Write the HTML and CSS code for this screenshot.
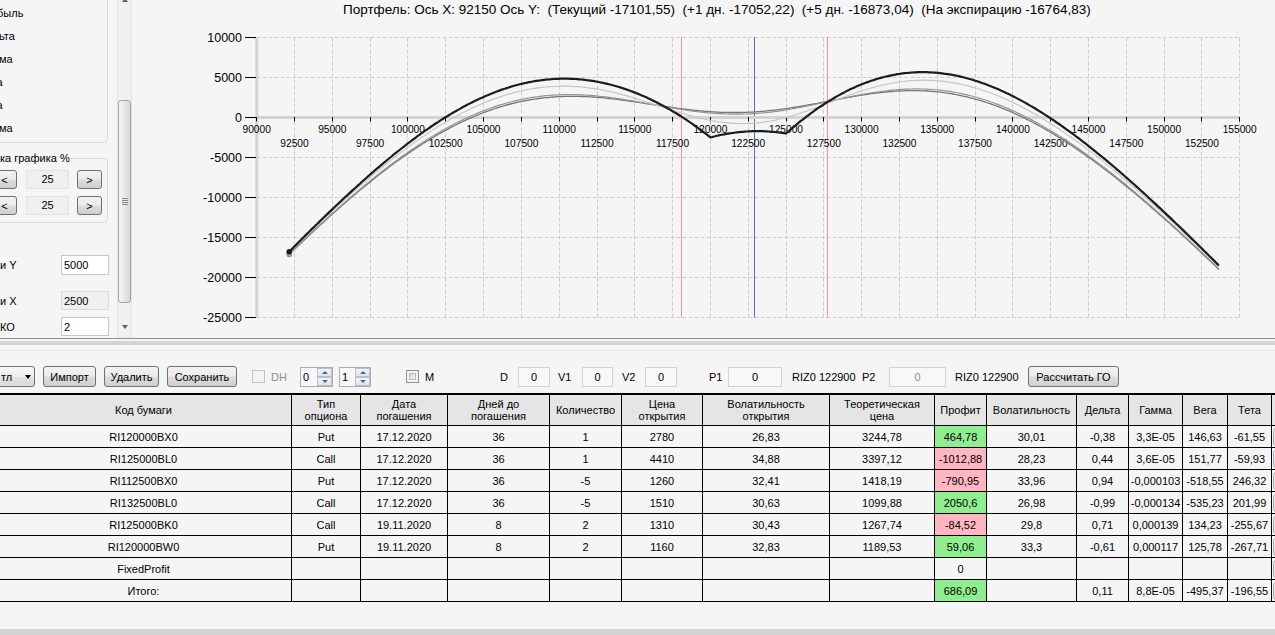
FILE: index.html
```html
<!DOCTYPE html>
<html lang="ru">
<head>
<meta charset="utf-8">
<title>Портфель</title>
<link rel="stylesheet" href="styles.css">
</head>
<body>
<div class="app">
  <div class="top">
    <div class="left">
      <div class="lp">
        <div class="gb1">
          <div class="chk i3">быль</div>
          <div class="chk i1">ьта</div>
          <div class="chk i1">ма</div>
          <div class="chk i4">а</div>
          <div class="chk i4">а</div>
          <div class="chk i1">ма</div>
        </div>
        <fieldset class="gb2">
          <legend>ка графика %</legend>
          <div class="zrow">
            <div class="btn sbtn first">&lt;</div>
            <div class="ro">25</div>
            <div class="btn sbtn">&gt;</div>
          </div>
          <div class="zrow r2">
            <div class="btn sbtn first">&lt;</div>
            <div class="ro">25</div>
            <div class="btn sbtn">&gt;</div>
          </div>
        </fieldset>
        <div class="frow fy"><span class="flbl">и Y</span><div class="tb">5000</div></div>
        <div class="frow fx"><span class="flbl">и X</span><div class="tb dis">2500</div></div>
        <div class="frow fk"><span class="flbl">КО</span><div class="tb">2</div></div>
      </div>
      <div class="vs">
        <div class="vs-btn up"><span class="tri-up"></span></div>
        <div class="vs-track"><div class="vs-thumb"><span class="grip"></span></div></div>
        <div class="vs-btn down"><span class="tri-down"></span></div>
      </div>
    </div>
    <div class="chart">
      <div class="ctitle">Портфель: Ось X: 92150 Ось Y:  (Текущий -17101,55)  (+1 дн. -17052,22)  (+5 дн. -16873,04)  (На экспирацию -16764,83)</div>
      <svg class="plot" width="1142" height="318" viewBox="133 20 1142 318">
        <path class="gridlines" d="M294.5 37.5V317.5M332.5 37.5V317.5M370.5 37.5V317.5M407.5 37.5V317.5M445.5 37.5V317.5M483.5 37.5V317.5M521.5 37.5V317.5M559.5 37.5V317.5M597.5 37.5V317.5M634.5 37.5V317.5M672.5 37.5V317.5M710.5 37.5V317.5M748.5 37.5V317.5M786.5 37.5V317.5M823.5 37.5V317.5M861.5 37.5V317.5M899.5 37.5V317.5M937.5 37.5V317.5M975.5 37.5V317.5M1012.5 37.5V317.5M1050.5 37.5V317.5M1088.5 37.5V317.5M1126.5 37.5V317.5M1164.5 37.5V317.5M1201.5 37.5V317.5M1239.5 37.5V317.5M256.5 37.5H1239.5M256.5 77.5H1239.5M256.5 157.5H1239.5M256.5 197.5H1239.5M256.5 237.5H1239.5M256.5 277.5H1239.5M256.5 317.5H1239.5"/>
        <path class="vpink" d="M681.5 37V317.5M827.5 37V317.5"/>
        <path class="vblue" d="M754.5 37V317.5"/>
        <path class="axis" d="M256.8 37V318M255 117.5H1240"/>
        <path class="ticks" d="M256.5 117V121.5M294.5 117V121.5M332.5 117V121.5M370.5 117V121.5M407.5 117V121.5M445.5 117V121.5M483.5 117V121.5M521.5 117V121.5M559.5 117V121.5M597.5 117V121.5M634.5 117V121.5M672.5 117V121.5M710.5 117V121.5M748.5 117V121.5M786.5 117V121.5M823.5 117V121.5M861.5 117V121.5M899.5 117V121.5M937.5 117V121.5M975.5 117V121.5M1012.5 117V121.5M1050.5 117V121.5M1088.5 117V121.5M1126.5 117V121.5M1164.5 117V121.5M1201.5 117V121.5M1239.5 117V121.5M245 37.5H256M245 77.5H256M245 117.5H256M245 157.5H256M245 197.5H256M245 237.5H256M245 277.5H256M245 317.5H256"/>
        <g class="yl">
          <text x="242" y="42">10000</text>
          <text x="242" y="82">5000</text>
          <text x="242" y="122">0</text>
          <text x="242" y="162">-5000</text>
          <text x="242" y="202">-10000</text>
          <text x="242" y="242">-15000</text>
          <text x="242" y="282">-20000</text>
          <text x="242" y="322">-25000</text>
        </g>
        <g class="xl">
          <text x="256.7" y="133">90000</text>
          <text x="294.5" y="147">92500</text>
          <text x="332.3" y="133">95000</text>
          <text x="370.1" y="147">97500</text>
          <text x="407.9" y="133">100000</text>
          <text x="445.7" y="147">102500</text>
          <text x="483.5" y="133">105000</text>
          <text x="521.4" y="147">107500</text>
          <text x="559.2" y="133">110000</text>
          <text x="597.0" y="147">112500</text>
          <text x="634.8" y="133">115000</text>
          <text x="672.6" y="147">117500</text>
          <text x="710.4" y="133">120000</text>
          <text x="748.2" y="147">122500</text>
          <text x="786.0" y="133">125000</text>
          <text x="823.8" y="147">127500</text>
          <text x="861.6" y="133">130000</text>
          <text x="899.4" y="147">132500</text>
          <text x="937.2" y="133">135000</text>
          <text x="975.0" y="147">137500</text>
          <text x="1012.9" y="133">140000</text>
          <text x="1050.7" y="147">142500</text>
          <text x="1088.5" y="133">145000</text>
          <text x="1126.3" y="147">147500</text>
          <text x="1164.1" y="133">150000</text>
          <text x="1201.9" y="147">152500</text>
          <text x="1239.7" y="133">155000</text>
        </g>
        <path id="curve-cur" class="c-cur" d=""/>
        <path id="curve-d1" class="c-d1" d=""/>
        <path id="curve-d5" class="c-d5" d=""/>
        <path id="curve-exp" class="c-exp" d=""/>
        <circle id="dot-cur" class="m-cur" r="2.6" cx="0" cy="0"/>
        <circle id="dot-d1" class="m-d1" r="2.6" cx="0" cy="0"/>
        <circle id="dot-d5" class="m-d5" r="2.6" cx="0" cy="0"/>
        <circle id="dot-exp" class="m-exp" r="2.8" cx="0" cy="0"/>
      </svg>
    </div>
  </div>
  <div class="sep1"></div>
  <div class="sep2"></div>
  <div class="sep3"></div>
  <div class="sep4"></div>
  <div class="sep5"></div>
  <div class="tbar">
    <div class="combo"><span class="ctext">тл</span><span class="carrow"></span></div>
    <div class="btn tb-imp">Импорт</div>
    <div class="btn tb-del">Удалить</div>
    <div class="btn tb-save">Сохранить</div>
    <div class="cbx cb-dh"></div>
    <div class="lbl l-dh dim">DH</div>
    <div class="nud n0"><span class="nv">0</span><div class="spin"><div class="sp"><span class="su"></span></div><div class="sp"><span class="sd"></span></div></div></div>
    <div class="nud n1"><span class="nv">1</span><div class="spin"><div class="sp"><span class="su"></span></div><div class="sp"><span class="sd"></span></div></div></div>
    <div class="cbx on cb-m"><span class="cbin"></span></div>
    <div class="lbl l-m">M</div>
    <div class="lbl l-d">D</div>
    <div class="fld f-d">0</div>
    <div class="lbl l-v1">V1</div>
    <div class="fld f-v1">0</div>
    <div class="lbl l-v2">V2</div>
    <div class="fld f-v2">0</div>
    <div class="lbl l-p1">P1</div>
    <div class="fld f-p1">0</div>
    <div class="lbl l-riz1">RIZ0 122900</div>
    <div class="lbl l-p2">P2</div>
    <div class="fld f-p2 dim">0</div>
    <div class="lbl l-riz2">RIZ0 122900</div>
    <div class="btn tb-go">Рассчитать ГО</div>
  </div>
  <div class="gridwrap">
    <table class="grid">
      <thead>
        <tr class="hrow">
          <th class="w1">Код бумаги</th>
          <th class="w2">Тип<br>опциона</th>
          <th class="w3">Дата<br>погашения</th>
          <th class="w4">Дней до<br>погашения</th>
          <th class="w5">Количество</th>
          <th class="w6">Цена<br>открытия</th>
          <th class="w7">Волатильность<br>открытия</th>
          <th class="w8">Теоретическая<br>цена</th>
          <th class="w9">Профит</th>
          <th class="w10">Волатильность</th>
          <th class="w11">Дельта</th>
          <th class="w12">Гамма</th>
          <th class="w13">Вега</th>
          <th class="w14">Тета</th>
          <th class="w15"></th>
        </tr>
      </thead>
      <tbody>
        <tr><td>RI120000BX0</td><td>Put</td><td>17.12.2020</td><td>36</td><td>1</td><td>2780</td><td>26,83</td><td>3244,78</td><td class="g">464,78</td><td>30,01</td><td>-0,38</td><td>3,3E-05</td><td>146,63</td><td>-61,55</td><td class="bc"><div class="cellbtn"></div></td></tr>
        <tr><td>RI125000BL0</td><td>Call</td><td>17.12.2020</td><td>36</td><td>1</td><td>4410</td><td>34,88</td><td>3397,12</td><td class="p">-1012,88</td><td>28,23</td><td>0,44</td><td>3,6E-05</td><td>151,77</td><td>-59,93</td><td class="bc"><div class="cellbtn"></div></td></tr>
        <tr><td>RI112500BX0</td><td>Put</td><td>17.12.2020</td><td>36</td><td>-5</td><td>1260</td><td>32,41</td><td>1418,19</td><td class="p">-790,95</td><td>33,96</td><td>0,94</td><td>-0,000103</td><td>-518,55</td><td>246,32</td><td class="bc"><div class="cellbtn"></div></td></tr>
        <tr><td>RI132500BL0</td><td>Call</td><td>17.12.2020</td><td>36</td><td>-5</td><td>1510</td><td>30,63</td><td>1099,88</td><td class="g">2050,6</td><td>26,98</td><td>-0,99</td><td>-0,000134</td><td>-535,23</td><td>201,99</td><td class="bc"><div class="cellbtn"></div></td></tr>
        <tr><td>RI125000BK0</td><td>Call</td><td>19.11.2020</td><td>8</td><td>2</td><td>1310</td><td>30,43</td><td>1267,74</td><td class="p">-84,52</td><td>29,8</td><td>0,71</td><td>0,000139</td><td>134,23</td><td>-255,67</td><td class="bc"><div class="cellbtn"></div></td></tr>
        <tr><td>RI120000BW0</td><td>Put</td><td>19.11.2020</td><td>8</td><td>2</td><td>1160</td><td>32,83</td><td>1189,53</td><td class="g">59,06</td><td>33,3</td><td>-0,61</td><td>0,000117</td><td>125,78</td><td>-267,71</td><td class="bc"><div class="cellbtn"></div></td></tr>
        <tr><td>FixedProfit</td><td></td><td></td><td></td><td></td><td></td><td></td><td></td><td>0</td><td></td><td></td><td></td><td></td><td></td><td class="bc"><div class="cellbtn"></div></td></tr>
        <tr><td>Итого:</td><td></td><td></td><td></td><td></td><td></td><td></td><td></td><td class="g">686,09</td><td></td><td>0,11</td><td>8,8E-05</td><td>-495,37</td><td>-196,55</td><td class="bc"><div class="cellbtn"></div></td></tr>
      </tbody>
    </table>
  </div>
  <div class="rest"></div>
  <div class="hband"></div>
</div>
<script src="script.js"></script>
</body>
</html>
```

FILE: styles.css
```css
* { box-sizing: border-box; }
html, body { margin: 0; padding: 0; }
body {
  background: #f5f5f5;
  font-family: "Liberation Sans", Arial, sans-serif;
  font-size: 11px;
  color: #000;
  width: 1275px;
  height: 635px;
  overflow: hidden;
}
.app { display: flex; flex-direction: column; height: 635px; }

/* ---------- top area ---------- */
.top { display: flex; height: 338px; flex: none; overflow: hidden; }
.left { width: 133px; flex: none; display: flex; }
.lp { width: 117px; height: 338px; flex: none; overflow: hidden; }

.gb1 {
  margin: -10px 0 0 -10px;
  width: 118px;
  height: 153px;
  border: 1px solid #d5d9dc;
  border-radius: 4px;
  padding: 11px 0 0 9px;
}
.chk { height: 23px; line-height: 23px; white-space: nowrap; }
.chk.i1 { text-indent: -1px; }
.chk.i3 { text-indent: -3px; }
.chk.i4 { text-indent: -3.5px; }

.gb2 {
  margin: 8.5px 0 0 -10px;
  width: 118px;
  height: 71.5px;
  min-width: 0;
  border: 1px solid #d5d9dc;
  border-radius: 4px;
  padding: 0 0 0 9px;
}
.gb2 legend { padding: 0; font-size: 11px; line-height: 13px; white-space: nowrap; }
.zrow { display: flex; align-items: center; height: 19px; margin-top: 5.5px; }
.zrow.r2 { margin-top: 7px; }

.btn {
  display: flex;
  align-items: center;
  justify-content: center;
  height: 21px;
  border: 1px solid #707070;
  border-radius: 3px;
  background: linear-gradient(#f2f2f2 0%, #ebebeb 49%, #dddddd 51%, #cfcfcf 100%);
  font-size: 11px;
  color: #000;
  white-space: nowrap;
  flex: none;
}
.sbtn { width: 25px; height: 19px; margin-left: 8px; }
.sbtn.first { margin-left: -8px; }
.ro {
  margin-left: 9px;
  width: 43px;
  height: 19px;
  border: 1px solid #e2e2e2;
  background: #efefef;
  text-align: center;
  line-height: 17px;
  flex: none;
}

.frow { display: flex; align-items: stretch; height: 19px; }
.fy { margin-top: 32px; height: 20px; }
.fx { margin-top: 16px; }
.fk { margin-top: 7px; }
.flbl { width: 61px; flex: none; display: flex; align-items: center; white-space: nowrap; }
.tb {
  width: 48px;
  flex: none;
  border: 1px solid #c5c7cc;
  background: #fff;
  padding-left: 2px;
  display: flex;
  align-items: center;
}
.tb.dis { background: #f0f0f0; border-color: #dcdcdc; }

.vs {
  width: 15px;
  height: 338px;
  flex: none;
  display: flex;
  flex-direction: column;
  background: #f0f0f0;
  border-left: 1px solid #e4e4e4;
  border-right: 1px solid #e4e4e4;
  overflow: hidden;
}
.vs-btn { height: 17px; flex: none; display: flex; align-items: center; justify-content: center; }
.vs-btn.up { margin-top: -9px; }
.vs-btn.down { margin-bottom: 3px; }
.tri-up { width: 0; height: 0; border-left: 3.5px solid transparent; border-right: 3.5px solid transparent; border-bottom: 4px solid #606060; }
.tri-down { width: 0; height: 0; border-left: 3.5px solid transparent; border-right: 3.5px solid transparent; border-top: 4px solid #606060; }
.vs-track { flex: 1; }
.vs-thumb {
  margin: 92px 0 0 0;
  height: 203px;
  border: 1px solid #a3a3a3;
  border-radius: 3px;
  background: linear-gradient(to right, #f6f6f6, #e8e8e8 50%, #d8d8d8);
  display: flex;
  align-items: center;
  justify-content: center;
}
.grip { width: 6px; height: 7px; background: repeating-linear-gradient(to bottom, #8a8a8a 0 1px, transparent 1px 2px); }

.chart { flex: 1; display: flex; flex-direction: column; }
.ctitle {
  height: 20px;
  line-height: 19px;
  padding-left: 210px;
  font-size: 13.5px;
  white-space: pre;
}
.plot { display: block; }
.gridlines { fill: none; stroke: #cdcdcd; stroke-width: 1; stroke-dasharray: 4 2; }
.vpink { fill: none; stroke: #ff8fa0; stroke-width: 1; }
.vblue { fill: none; stroke: #5f719a; stroke-width: 1; }
.axis { fill: none; stroke: #d3d3d3; stroke-width: 3; }
.ticks { fill: none; stroke: #000; stroke-width: 1; }
.yl text { font-family: "Liberation Sans", Arial, sans-serif; font-size: 12.5px; text-anchor: end; fill: #000; }
.xl text { font-family: "Liberation Sans", Arial, sans-serif; font-size: 10.2px; text-anchor: middle; fill: #000; }
.c-cur { fill: none; stroke: #767676; stroke-width: 1.3; }
.c-d1 { fill: none; stroke: #959595; stroke-width: 1.2; }
.c-d5 { fill: none; stroke: #c6c6c6; stroke-width: 1.2; }
.c-exp { fill: none; stroke: #1c1c1c; stroke-width: 2.2; }
.m-cur { fill: #767676; }
.m-d1 { fill: #959595; }
.m-d5 { fill: #c6c6c6; }
.m-exp { fill: #1c1c1c; }

/* ---------- splitter ---------- */
.sep1 { height: 1px; background: #8c8c8c; flex: none; }
.sep2 { height: 2px; flex: none; }
.sep3 { height: 4px; background: #d3d3d3; flex: none; }
.sep4 { height: 5px; flex: none; }
.sep5 { height: 1px; background: #e2e2e2; flex: none; }

/* ---------- toolbar ---------- */
.tbar {
  height: 42px;
  flex: none;
  padding: 15px 0 6px 0;
  display: flex;
  align-items: center;
  white-space: nowrap;
}
.combo {
  margin-left: -9px;
  width: 44px;
  height: 21px;
  flex: none;
  border: 1px solid #707070;
  border-radius: 3px;
  background: linear-gradient(#f7f7f7, #ececec 50%, #e2e2e2 51%, #dadada);
  display: flex;
  align-items: center;
  padding-left: 9px;
}
.carrow { margin-left: auto; margin-right: 3px; width: 0; height: 0; border-left: 3.5px solid transparent; border-right: 3.5px solid transparent; border-top: 4px solid #000; }
.tb-imp { margin-left: 8px; width: 53px; }
.tb-del { margin-left: 8px; width: 55px; }
.tb-save { margin-left: 8px; width: 70px; }
.tb-go { width: 91px; }
.cbx { width: 13px; height: 13px; flex: none; border: 1px solid #c2c2c2; background: #f4f4f4; }
.cbx.on { border-color: #8e8f8f; padding: 2px; }
.cbin { display: block; width: 7px; height: 7px; border: 1px solid #b9bcc0; background: linear-gradient(135deg, #d1d4d8, #f2f2f2); }
.cb-dh { margin-left: 15px; }
.cb-m { margin-left: 35px; }
.lbl { flex: none; }
.dim { color: #8d8d8d; }
.l-dh { margin-left: 6px; width: 20px; }
.l-m { margin-left: 6px; width: 20px; }
.l-d { margin-left: 55px; width: 18px; }
.l-v1 { margin-left: 8px; width: 24px; }
.l-v2 { margin-left: 9px; width: 23px; }
.l-p1 { margin-left: 32px; width: 19px; }
.l-riz1 { margin-left: 10px; width: 70px; }
.l-p2 { width: 27px; }
.l-riz2 { margin-left: 9px; width: 73px; }
.nud {
  height: 20px;
  flex: none;
  border: 1px solid #abadb3;
  background: #f7f7f7;
  display: flex;
  align-items: stretch;
}
.n0 { margin-left: 9px; width: 33px; }
.n1 { margin-left: 6px; width: 32px; }
.nv { padding-left: 2px; display: flex; align-items: center; }
.spin { margin-left: auto; width: 15px; display: flex; flex-direction: column; }
.sp { flex: 1; border: 1px solid #b6bfcb; background: linear-gradient(#f4f7fa, #dbe2ea); display: flex; align-items: center; justify-content: center; }
.su { width: 0; height: 0; border-left: 3px solid transparent; border-right: 3px solid transparent; border-bottom: 3px solid #4f6786; }
.sd { width: 0; height: 0; border-left: 3px solid transparent; border-right: 3px solid transparent; border-top: 3px solid #4f6786; }
.fld {
  height: 20px;
  flex: none;
  border: 1px solid #d3d3d3;
  background: #f8f8f8;
  text-align: center;
  line-height: 18px;
}
.f-d { width: 32px; }
.f-v1 { width: 31px; }
.f-v2 { width: 32px; }
.f-p1 { width: 54px; }
.f-p2 { width: 57px; }

/* ---------- data grid ---------- */
.gridwrap { flex: none; overflow: hidden; }
.grid {
  margin-left: -4px;
  width: 1336px;
  table-layout: fixed;
  border-collapse: separate;
  border-spacing: 0;
  border-top: 2px solid #000;
}
.grid th, .grid td {
  padding: 0;
  border-right: 1px solid #000;
  border-bottom: 1px solid #000;
  text-align: center;
  font-weight: normal;
  white-space: nowrap;
  overflow: hidden;
}
.hrow { height: 31px; }
.grid th { height: 31px; line-height: 12px; background: #e5e5e5; }
.grid tbody tr { height: 22px; }
.grid td { height: 22px; line-height: 20px; background: #f5f5f5; }
.grid td.g { background: #90ee90; }
.grid td.p { background: #ffb6c1; }
.grid td.bc { text-align: left; border-right: none; }
.cellbtn { margin-left: 1px; width: 50px; height: 18px; border: 1px solid #adadad; border-radius: 3px; background: linear-gradient(#f6f6f6, #dedede); }
.w1 { width: 296px; }
.w2 { width: 69px; }
.w3 { width: 87px; }
.w4 { width: 102px; }
.w5 { width: 72px; }
.w6 { width: 81px; }
.w7 { width: 127px; }
.w8 { width: 105px; }
.w9 { width: 52px; }
.w10 { width: 90px; }
.w11 { width: 52px; }
.w12 { width: 54px; }
.w13 { width: 45px; }
.w14 { width: 44px; }
.w15 { width: 60px; }

.rest { flex: 1; }
.hband { height: 6px; background: #d3d3d3; flex: none; }
```

FILE: script.js
```js
(function () {
  var F0 = 122900;
  // strike, call(1)/put(-1), quantity, open price, days to expiry, volatility
  var legs = [
    [120000, -1, 1, 2780, 36, 0.3001],
    [125000, 1, 1, 4410, 36, 0.2823],
    [112500, -1, -5, 1260, 36, 0.3396],
    [132500, 1, -5, 1510, 36, 0.2698],
    [125000, 1, 2, 1310, 8, 0.298],
    [120000, -1, 2, 1160, 8, 0.333]
  ];
  function ncdf(x) {
    var t = 1 / (1 + 0.2316419 * Math.abs(x));
    var p = 0.3989422804 * Math.exp(-x * x / 2) * t *
      (0.31938153 + t * (-0.356563782 + t * (1.781477937 + t * (-1.821255978 + t * 1.330274429))));
    return x > 0 ? 1 - p : p;
  }
  function price(F, K, cp, T, v) {
    if (T <= 0) return Math.max(cp * (F - K), 0);
    var s = v * Math.sqrt(T);
    var d1 = Math.log(F / K) / s + s / 2;
    var d2 = d1 - s;
    return cp * (F * ncdf(cp * d1) - K * ncdf(cp * d2));
  }
  function pnl(F, shift) {
    var sum = 0;
    for (var i = 0; i < legs.length; i++) {
      var L = legs[i];
      var T = Math.max(L[4] - shift, 0) / 365;
      sum += L[2] * (price(F, L[0], L[1], T, L[5]) - L[3]);
    }
    return sum;
  }
  function sx(v) { return 256.7 + (v - 90000) * 983 / 65000; }
  function sy(v) { return 117.5 - v * 0.008; }
  var lo = 92150, hi = F0 * 1.25;
  var xs = [];
  for (var i = 0; i <= 500; i++) xs.push(lo + (hi - lo) * i / 500);
  xs.push(120000, 125000);
  xs.sort(function (a, b) { return a - b; });
  var curves = [['cur', 0], ['d1', 1], ['d5', 5], ['exp', 8]];
  curves.forEach(function (c) {
    var d = '';
    xs.forEach(function (F, j) {
      d += (j ? 'L' : 'M') + sx(F).toFixed(1) + ' ' + sy(pnl(F, c[1])).toFixed(1);
    });
    document.getElementById('curve-' + c[0]).setAttribute('d', d);
    var m = document.getElementById('dot-' + c[0]);
    m.setAttribute('cx', sx(lo).toFixed(1));
    m.setAttribute('cy', sy(pnl(lo, c[1])).toFixed(1));
  });
})();
```
